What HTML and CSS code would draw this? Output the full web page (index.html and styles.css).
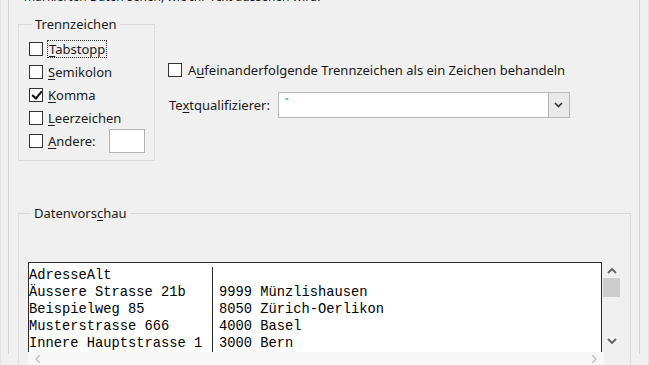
FILE: index.html
```html
<!DOCTYPE html>
<html lang="de">
<head>
  <meta charset="UTF-8" />
  <title>Textkonvertierungs-Assistent</title>
  <link rel="stylesheet" href="styles.css">
</head>
<body>

<div id="dialog">
  <p class="intro">markierten Daten sehen, wie Ihr Text aussehen wird.</p>

  <div class="options">
    <fieldset class="group delims">
      <legend>Trennzeichen</legend>
      <label class="check focus"><span class="box"></span><span class="txt"><u>T</u>abstopp</span></label>
      <label class="check"><span class="box"></span><span class="txt"><u>S</u>emikolon</span></label>
      <label class="check"><span class="box on"></span><span class="txt"><u>K</u>omma</span></label>
      <label class="check"><span class="box"></span><span class="txt"><u>L</u>eerzeichen</span></label>
      <label class="check other"><span class="box"></span><span class="txt"><u>A</u>ndere:</span><span class="field"></span></label>
    </fieldset>

    <div class="side">
      <label class="check"><span class="box"></span><span class="txt">A<u>u</u>feinanderfolgende Trennzeichen als ein Zeichen behandeln</span></label>
      <div class="qualifier">
        <span class="txt">Te<u>x</u>tqualifizierer:</span>
        <div class="select">
          <span class="value">"</span>
          <span class="drop">
            <svg width="9" height="6" viewBox="0 0 9 6"><path d="M1 1 L4.5 4.5 L8 1" fill="none" stroke="#333" stroke-width="1.6"/></svg>
          </span>
        </div>
      </div>
    </div>
  </div>

  <fieldset class="group preview">
    <legend>Datenvors<u>c</u>hau</legend>
    <div class="list">
      <div class="grid">
        <div class="col first">
          <div>AdresseAlt</div>
          <div>Äussere Strasse 21b</div>
          <div>Beispielweg 85</div>
          <div>Musterstrasse 666</div>
          <div>Innere Hauptstrasse 1</div>
        </div>
        <div class="col">
          <div>&nbsp;</div>
          <div>9999 Münzlishausen</div>
          <div>8050 Zürich-Oerlikon</div>
          <div>4000 Basel</div>
          <div>3000 Bern</div>
        </div>
      </div>
      <div class="vscroll">
        <svg width="10" height="7" viewBox="0 0 10 7"><path d="M1 6 L5 2 L9 6" fill="none" stroke="#606060" stroke-width="1.8"/></svg>
        <span class="thumb"></span>
        <span class="spacer"></span>
        <svg width="10" height="7" viewBox="0 0 10 7"><path d="M1 1 L5 5 L9 1" fill="none" stroke="#606060" stroke-width="1.8"/></svg>
      </div>
    </div>
    <div class="hscroll">
      <svg width="6" height="10" viewBox="0 0 6 10"><path d="M5 1 L1 5 L5 9" fill="none" stroke="#c4c4c4" stroke-width="1.4"/></svg>
      <svg width="6" height="10" viewBox="0 0 6 10"><path d="M1 1 L5 5 L1 9" fill="none" stroke="#c4c4c4" stroke-width="1.4"/></svg>
    </div>
  </fieldset>
</div>

</body>
</html>
```

FILE: styles.css
```css
html, body {
  margin: 0;
  height: 100%;
  overflow: hidden;
}
body {
  background: #f0f0f0;
  font-family: "Noto Sans", "Open Sans", sans-serif;
  font-size: 13px;
  color: #1a1a1a;
  padding: 0 4px 0 2px;
  border-left: 1px solid #e2e2e2;
  border-right: 1px solid #e2e2e2;
  box-sizing: border-box;
}
#dialog {
  margin-left: 5px;
  width: 632px;
  height: 100%;
  border-left: 1px solid #d4d4d4;
  border-right: 1px solid #d4d4d4;
  box-sizing: border-box;
  padding: 0 8px 0 9px;
}
.intro {
  margin: -11px 0 0 6px;
  line-height: 15px;
  height: 15px;
  font-size: 12px;
}
u {
  text-decoration-thickness: 1px;
  text-underline-offset: 2px;
}
.options {
  display: flex;
  gap: 13px;
  margin-top: 13px;
}
.group {
  margin: 0;
  border: 1px solid #dcdcdc;
  padding: 0;
  min-width: 0;
}
.group legend {
  padding: 0 3px;
  margin-left: 3px;
  line-height: 15px;
}
.delims {
  width: 137px;
  box-sizing: border-box;
  height: 144px;
  padding: 5px 0 0 10px;
}
.check {
  display: flex;
  align-items: center;
  height: 23px;
  gap: 5px;
}
.box {
  width: 14px;
  height: 14px;
  box-sizing: border-box;
  border: 1px solid #333;
  background: #fff;
  flex: none;
  position: relative;
}
.box.on::after {
  content: "";
  position: absolute;
  left: 4px;
  top: 0;
  width: 4px;
  height: 8px;
  border: solid #111;
  border-width: 0 2px 2px 0;
  transform: rotate(40deg);
}
.focus .txt {
  outline: 1px dotted #333;
  outline-offset: 0;
  padding: 0 1px;
  line-height: 16px;
}
.other .field {
  width: 36px;
  height: 24px;
  box-sizing: border-box;
  border: 1px solid #b4b4b4;
  background: #fff;
  margin-left: 8px;
}
.side {
  padding-top: 45px;
  display: flex;
  flex-direction: column;
  gap: 14px;
}
.side .check {
  height: 16px;
}
.side .check .box {
  margin-right: 1px;
}
.qualifier {
  display: flex;
  align-items: center;
  gap: 8px;
  padding-left: 1px;
}
.select {
  display: flex;
  width: 292px;
  height: 26px;
  box-sizing: border-box;
  border: 1px solid #b9b9b9;
  background: #fff;
}
.select .value {
  flex: 1;
  font-size: 9px;
  padding: 2px 0 0 6px;
  color: #555;
}
.select .drop {
  width: 20px;
  background: #e9e9e9;
  border-left: 1px solid #b4b4b4;
  display: flex;
  align-items: center;
  justify-content: center;
}
.preview {
  margin-top: 45px;
  height: 160px;
  padding: 41px 9px 0 9px;
}
.list {
  display: flex;
  height: 90px;
}
.grid {
  flex: 1;
  display: flex;
  background: #fff;
  border: 1px solid #2a2a2a;
  border-bottom: 0;
  font-family: "Liberation Mono", "Courier New", monospace;
  font-size: 13.75px;
  line-height: 17px;
  color: #000;
  padding-top: 4px;
}
.col {
  padding: 0;
}
.col.first {
  width: 183px;
  border-right: 1px solid #2a2a2a;
}
.col + .col {
  padding-left: 6px;
}
.vscroll {
  width: 19px;
  display: flex;
  flex-direction: column;
  align-items: center;
  padding: 5px 0 7px;
  box-sizing: border-box;
}
.vscroll .thumb {
  width: 17px;
  height: 19px;
  background: #cdcdcd;
  margin-top: 4px;
}
.vscroll .spacer {
  flex: 1;
}
.hscroll {
  width: 576px;
  height: 14px;
  background: #f7f7f7;
  display: flex;
  justify-content: space-between;
  align-items: center;
  padding: 0 7px;
  box-sizing: border-box;
}
```
